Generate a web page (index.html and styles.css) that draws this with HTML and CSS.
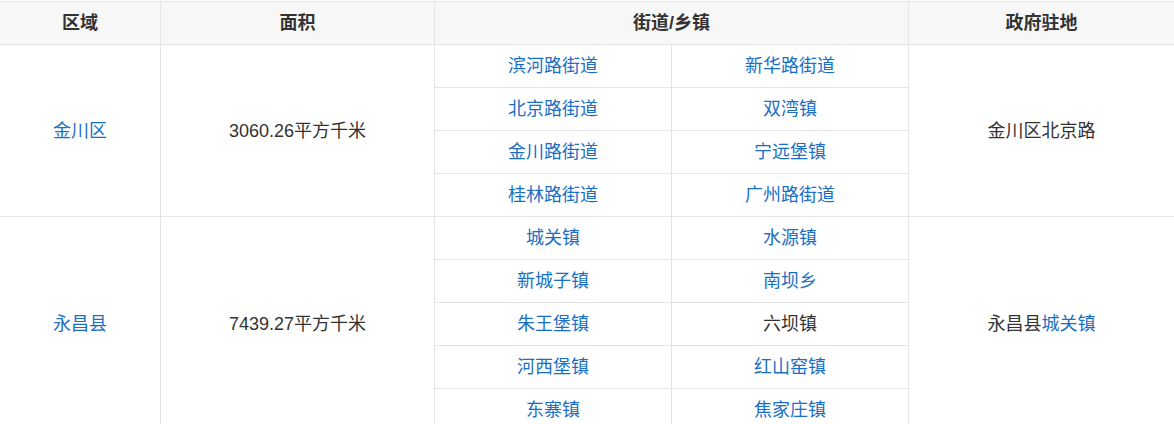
FILE: index.html
```html
<!DOCTYPE html>
<html lang="zh">
<head>
<meta charset="utf-8">
<link rel="stylesheet" href="styles.css">
</head>
<body>
<table class="geo">
  <colgroup>
    <col class="c1"><col class="c2"><col class="c3"><col class="c4"><col class="c5">
  </colgroup>
  <thead>
    <tr><th>区域</th><th>面积</th><th colspan="2">街道/乡镇</th><th>政府驻地</th></tr>
  </thead>
  <tbody>
    <tr>
      <td rowspan="4"><a class="lnk">金川区</a></td>
      <td rowspan="4">3060.26平方千米</td>
      <td><a class="lnk">滨河路街道</a></td><td><a class="lnk">新华路街道</a></td>
      <td rowspan="4">金川区北京路</td>
    </tr>
    <tr><td><a class="lnk">北京路街道</a></td><td><a class="lnk">双湾镇</a></td></tr>
    <tr><td><a class="lnk">金川路街道</a></td><td><a class="lnk">宁远堡镇</a></td></tr>
    <tr><td><a class="lnk">桂林路街道</a></td><td><a class="lnk">广州路街道</a></td></tr>
    <tr>
      <td rowspan="5"><a class="lnk">永昌县</a></td>
      <td rowspan="5">7439.27平方千米</td>
      <td><a class="lnk">城关镇</a></td><td><a class="lnk">水源镇</a></td>
      <td rowspan="5">永昌县<a class="lnk">城关镇</a></td>
    </tr>
    <tr><td><a class="lnk">新城子镇</a></td><td><a class="lnk">南坝乡</a></td></tr>
    <tr><td><a class="lnk">朱王堡镇</a></td><td>六坝镇</td></tr>
    <tr><td><a class="lnk">河西堡镇</a></td><td><a class="lnk">红山窑镇</a></td></tr>
    <tr><td><a class="lnk">东寨镇</a></td><td><a class="lnk">焦家庄镇</a></td></tr>
  </tbody>
</table>
</body>
</html>
```

FILE: styles.css
```css
html, body {
  margin: 0;
  padding: 0;
  background: #ffffff;
}
body {
  font-family: "Liberation Sans", "Noto Sans CJK SC", sans-serif;
  font-size: 18px;
  color: #333333;
}
.geo {
  border-collapse: collapse;
  table-layout: fixed;
  width: 1175px;
  margin: 1px 0 0 -1px;
}
.c1 { width: 161px; }
.c2 { width: 274px; }
.c3 { width: 237px; }
.c4 { width: 237px; }
.c5 { width: 266px; }
.geo th,
.geo td {
  border: 1px solid #e5e5e5;
  box-sizing: border-box;
  height: 43px;
  padding: 0 8px;
  text-align: center;
  vertical-align: middle;
  line-height: 20px;
}
.geo th {
  background: #f7f7f7;
  font-weight: 700;
  color: #333333;
}
.lnk {
  color: #1a6fc4;
  text-decoration: none;
}
```
